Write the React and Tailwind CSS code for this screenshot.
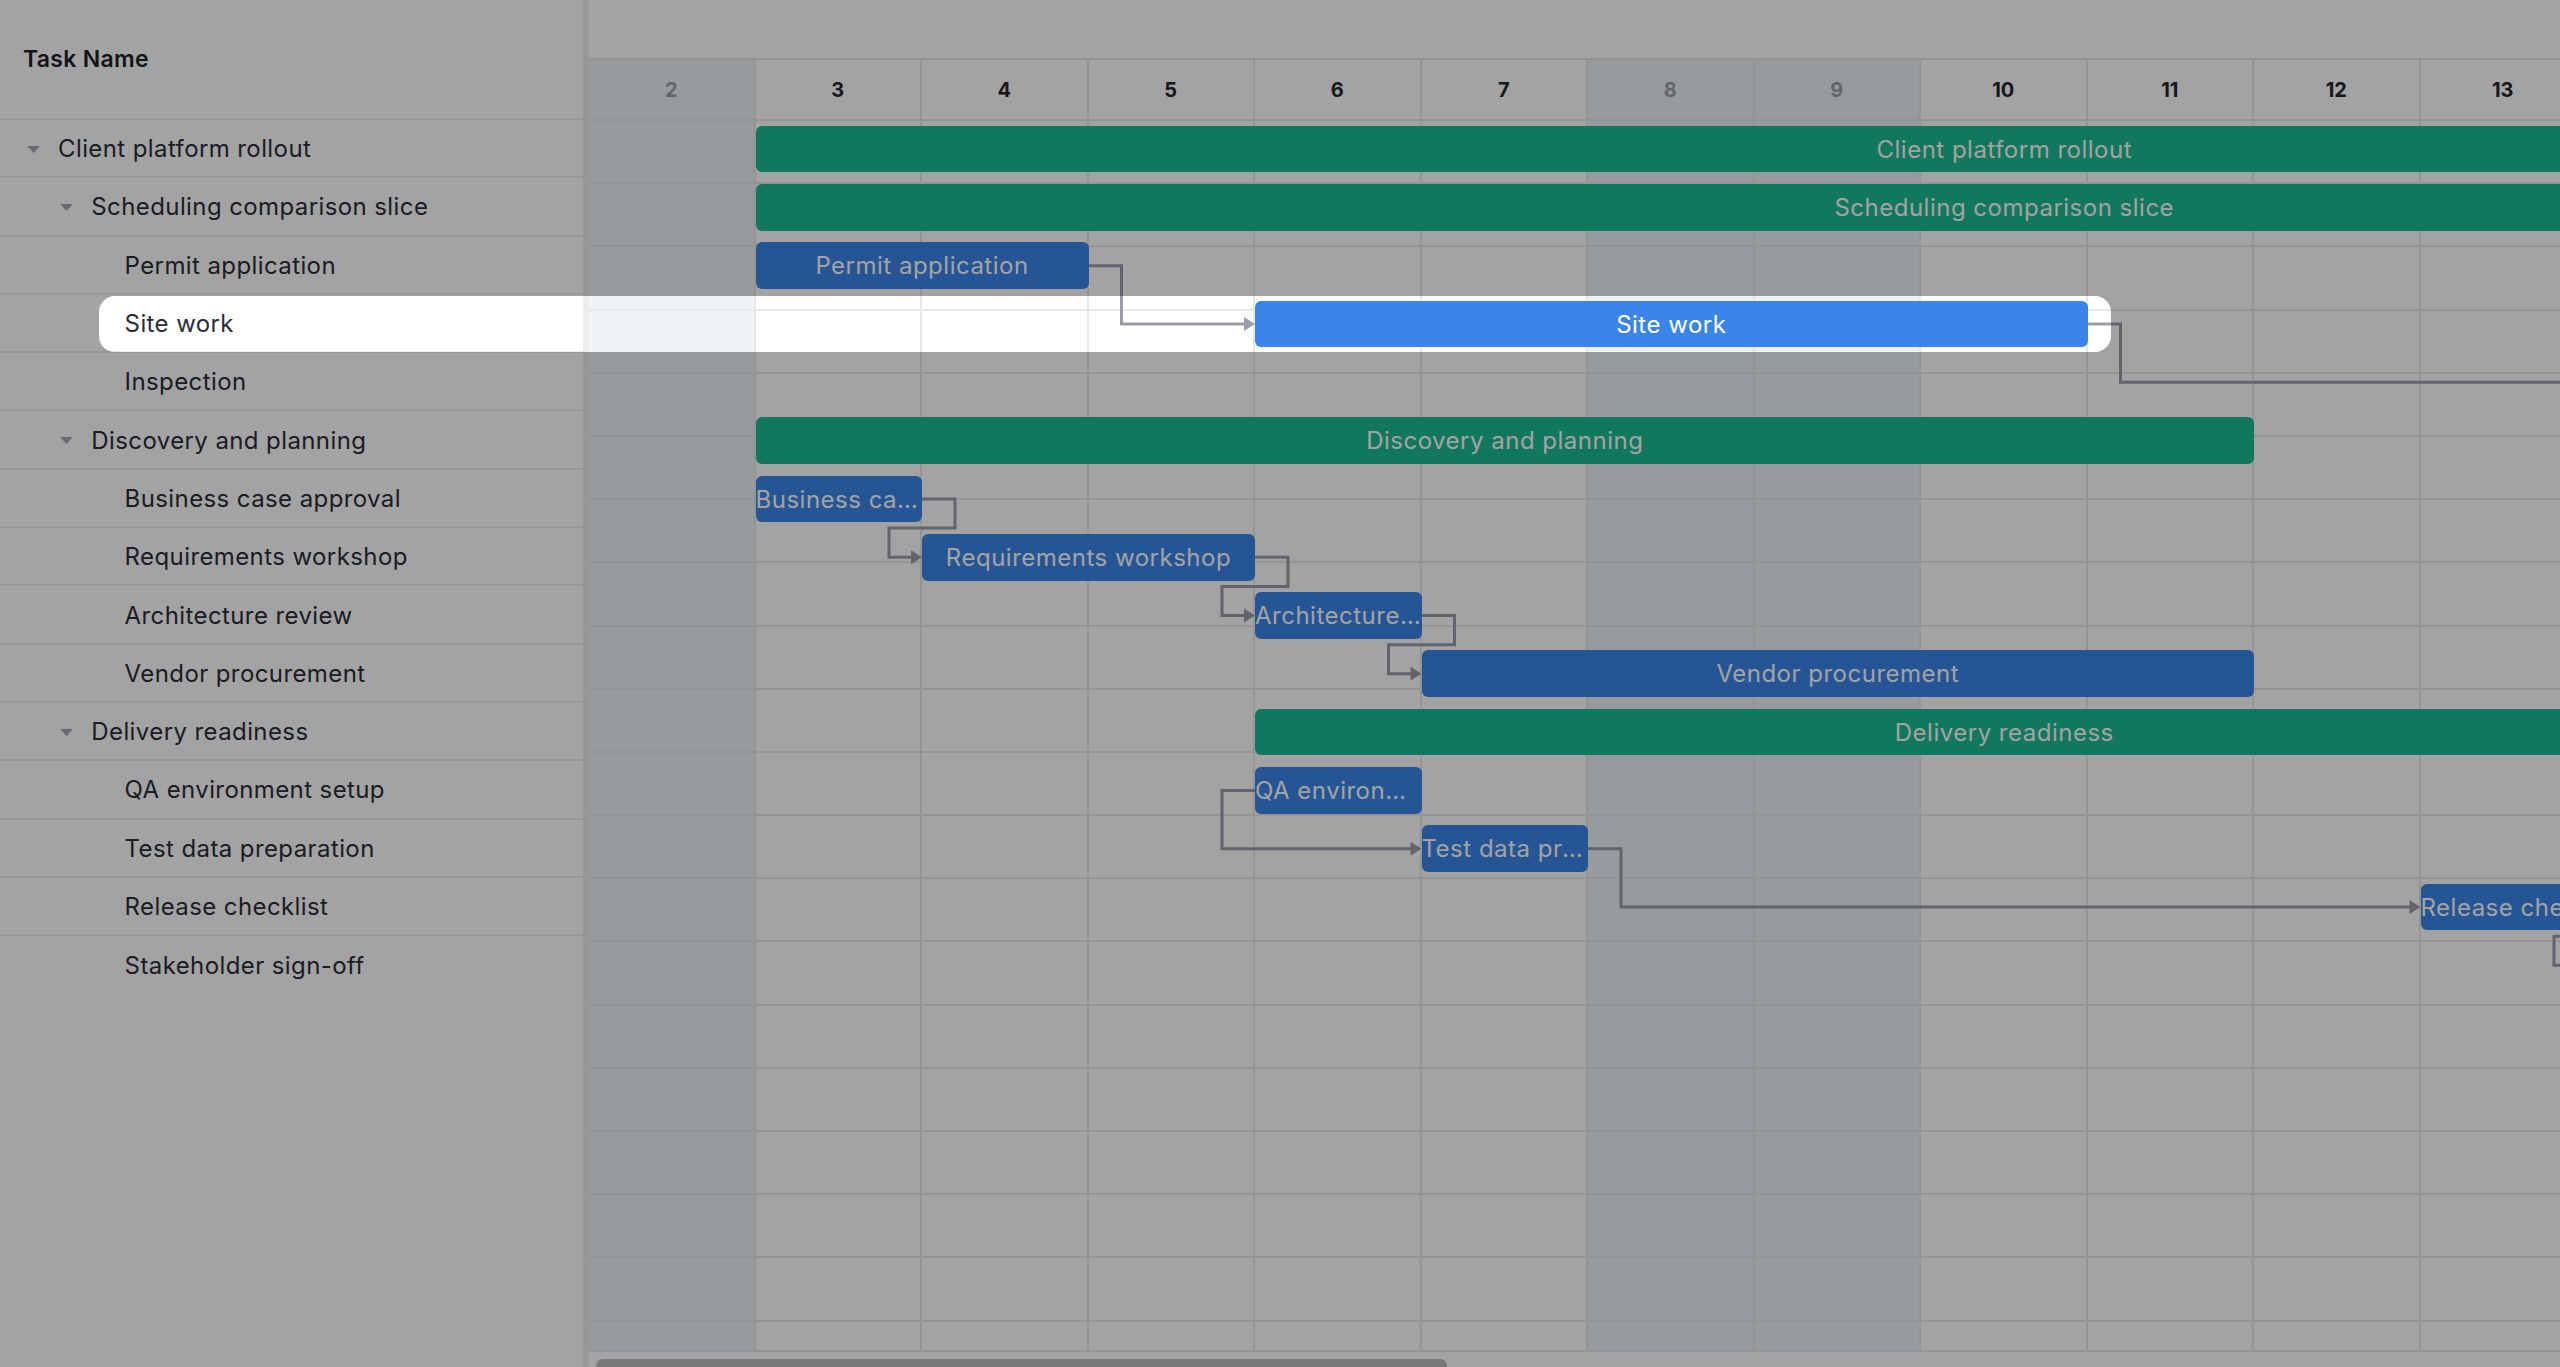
import React from 'react';

const DAY_W = 166.5;
const ROW_H = 58.3;
const FIRST_DAY = 2;
const DAYS = [2, 3, 4, 5, 6, 7, 8, 9, 10, 11, 12, 13];
const WEEKENDS = [2, 8, 9, 15, 16];
const LINK_GAP = 33;

const tasks = [
    { name: 'Client platform rollout', level: 0, group: true, start: 3, dur: 15 },
    { name: 'Scheduling comparison slice', level: 1, group: true, start: 3, dur: 15 },
    { name: 'Permit application', level: 2, start: 3, dur: 2 },
    { name: 'Site work', level: 2, start: 6, dur: 5, active: true },
    { name: 'Inspection', level: 2, start: 16, dur: 2 },
    { name: 'Discovery and planning', level: 1, group: true, start: 3, dur: 9 },
    { name: 'Business case approval', level: 2, start: 3, dur: 1 },
    { name: 'Requirements workshop', level: 2, start: 4, dur: 2 },
    { name: 'Architecture review', level: 2, start: 6, dur: 1 },
    { name: 'Vendor procurement', level: 2, start: 7, dur: 5 },
    { name: 'Delivery readiness', level: 1, group: true, start: 6, dur: 9 },
    { name: 'QA environment setup', level: 2, start: 6, dur: 1 },
    { name: 'Test data preparation', level: 2, start: 7, dur: 1 },
    { name: 'Release checklist', level: 2, start: 13, dur: 1 },
    { name: 'Stakeholder sign-off', level: 2, start: 14, dur: 1 },
];

const links = [
    { from: 2, to: 3 },
    { from: 3, to: 4 },
    { from: 6, to: 7 },
    { from: 7, to: 8 },
    { from: 8, to: 9 },
    { from: 11, to: 12, type: 'ss' },
    { from: 12, to: 13 },
    { from: 13, to: 14 },
];

const dayX = (day) => (day - FIRST_DAY) * DAY_W;
const rowY = (row) => row * ROW_H + ROW_H / 2;

function linkPath(link) {
    const a = tasks[link.from];
    const b = tasks[link.to];
    const y1 = rowY(link.from);
    const y2 = rowY(link.to);
    const tx = dayX(b.start);

    if (link.type === 'ss') {
        const sx = dayX(a.start);
        const bx = Math.min(sx, tx) - LINK_GAP;
        return `M${sx} ${y1}H${bx}V${y2}H${tx - 9}`;
    }

    const sx = dayX(a.start + a.dur);
    if (tx - sx >= 2 * LINK_GAP) {
        return `M${sx} ${y1}H${sx + LINK_GAP}V${y2}H${tx - 9}`;
    }
    const midY = y1 + ROW_H / 2;
    return `M${sx} ${y1}H${sx + LINK_GAP}V${midY}H${tx - LINK_GAP}V${y2}H${tx - 9}`;
}

function Chevron() {
    return (
        <svg width="13" height="7" viewBox="0 0 13 7" className="ml-[4px]">
            <polygon points="0,0 13,0 6.5,7" fill="#a6a6b5" />
        </svg>
    );
}

function TaskRow({ task, last }) {
    return (
        <div
            className={`flex h-[58.3px] shrink-0 items-center pl-[23px] pt-[2px] ${last ? '' : 'border-b-2 border-[#ececee]'}`}
        >
            {/* indent per level */}
            {task.level > 0 && <div className={task.level === 1 ? 'w-[33.3px] shrink-0' : 'w-[66.6px] shrink-0'} />}
            <div className="flex w-[35px] shrink-0 items-center">{task.group && <Chevron />}</div>
            <span className="truncate text-[24px] tracking-[0.4px] text-[#2c2c38]">{task.name}</span>
        </div>
    );
}

function Bar({ task }) {
    const left = dayX(task.start);
    const width = task.dur * DAY_W;
    const color = task.group ? 'bg-[#1bba92]' : 'bg-[#3a85e9]';

    return (
        <div
            className={`absolute top-[5.8px] h-[46.7px] rounded-[6px] ${color} truncate text-center text-[24px] leading-[48px] tracking-[0.5px] text-white`}
            style={{ left, width }}
        >
            {task.name}
        </div>
    );
}

export default function App() {
    const contentWidth = 20 * DAY_W;
    const bodyHeight = tasks.length * ROW_H;

    return (
        <div className="relative flex h-[1367px] w-full overflow-hidden bg-white font-['Inter',sans-serif]">
            {/* Task list */}
            <div className="flex w-[583px] shrink-0 flex-col">
                <div className="flex h-[120px] shrink-0 items-center border-b-2 border-[#ececee] pl-[23px]">
                    <span className="text-[23px] font-semibold tracking-[0.3px] text-[#1f1f29]">Task Name</span>
                </div>
                {tasks.map((task, i) => (
                    <TaskRow key={task.name} task={task} last={i === tasks.length - 1} />
                ))}
            </div>

            {/* Splitter */}
            <div className="w-[6px] shrink-0 bg-[#ececec]" />

            {/* Timeline */}
            <div className="flex min-w-0 flex-1 flex-col overflow-hidden">
                <div className="h-[60px] shrink-0 border-b-2 border-[#e8e8ea]" />

                <div className="grid h-[1292px] shrink-0 border-b-2 border-[#e8e8ea]">
                    {/* Day columns */}
                    <div className="col-start-1 row-start-1 flex">
                        {DAYS.map((day) => {
                            const weekend = WEEKENDS.includes(day);
                            return (
                                <div
                                    key={day}
                                    className={`w-[166.5px] shrink-0 border-r-2 border-[#e8e8ea] ${weekend ? 'bg-[#eef3f8]' : ''}`}
                                >
                                    <div
                                        className={`flex h-[60px] items-center justify-center text-[20px] font-bold ${weekend ? 'text-[#9aa0a8]' : 'text-[#24242e]'}`}
                                    >
                                        {day}
                                    </div>
                                </div>
                            );
                        })}
                    </div>

                    {/* Horizontal grid lines */}
                    <div className="col-start-1 row-start-1 flex flex-col overflow-hidden pt-[59px]">
                        {Array.from({ length: 20 }).map((_, i) => (
                            <div key={i} className="h-[63.2px] shrink-0 border-t-2 border-[#e8e8ea]" />
                        ))}
                    </div>

                    {/* Dependency links */}
                    <div className="col-start-1 row-start-1 mt-[60px]">
                        <svg width={contentWidth} height={bodyHeight} className="block">
                            {links.map((link, i) => {
                                const b = tasks[link.to];
                                const tx = dayX(b.start);
                                const y2 = rowY(link.to);
                                return (
                                    <g key={i}>
                                        <path d={linkPath(link)} fill="none" stroke="#9c9caa" strokeWidth="3" />
                                        <polygon
                                            points={`${tx},${y2} ${tx - 11},${y2 - 7} ${tx - 11},${y2 + 7}`}
                                            fill="#9c9caa"
                                        />
                                    </g>
                                );
                            })}
                        </svg>
                    </div>

                    {/* Bars */}
                    <div className="col-start-1 row-start-1 flex flex-col pt-[60px]">
                        {tasks.map((task) => (
                            <div key={task.name} className="relative h-[58.3px] shrink-0">
                                <Bar task={task} />
                            </div>
                        ))}
                    </div>
                </div>

                {/* Horizontal scrollbar */}
                <div className="h-[15px] shrink-0 pl-[7px] pt-[7px]">
                    <div className="h-[14px] w-[851px] rounded-[7px] bg-[#bfbfbf]" />
                </div>
            </div>

            {/* Spotlight on the selected task */}
            <div className="pointer-events-none absolute left-[99px] top-[296px] h-[56px] w-[2012px] rounded-[16px] shadow-[0_0_0_3000px_rgba(0,0,0,0.36)]" />
        </div>
    );
}
